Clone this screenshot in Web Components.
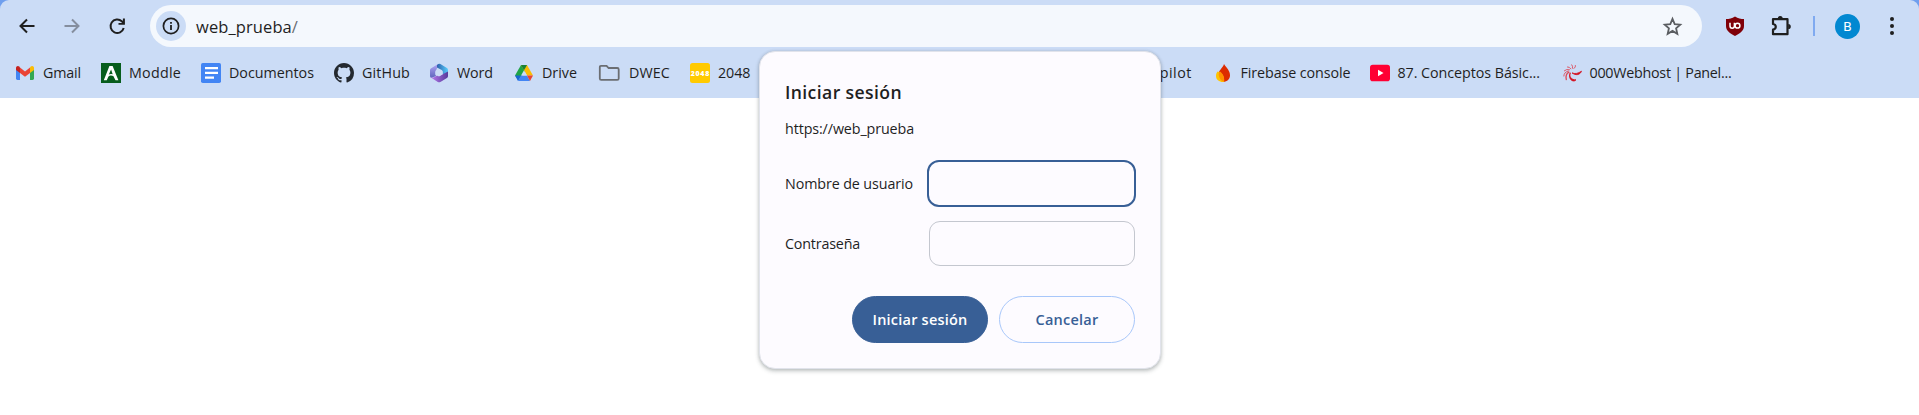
<!DOCTYPE html>
<html lang="es"><head><meta charset="utf-8"><title>web_prueba</title>
<style>html,body{margin:0;background:#fff;overflow:hidden}body{font-family:"Open Sans","Noto Sans",sans-serif;font-weight:400;color:#1f1f1f;height:415px}</style></head>
<body>
<browser-page></browser-page>
<script>
const ICONS = {
back:'<svg viewBox="0 0 20 20"><path d="M17.500 10H4M10 3.500 3.500 10l6.500 6.500" fill="none" stroke="#1f1f1f" stroke-width="2"/></svg>',
forward:'<svg viewBox="0 0 20 20"><path d="M2.500 10H16M10 3.500 16.500 10 10 16.500" fill="none" stroke="#858e9e" stroke-width="2"/></svg>',
reload:'<svg viewBox="0 0 20 20"><path d="M16.700 12A6.700 6.700 0 1 1 14.800 5.300L17 7.600" fill="none" stroke="#1f1f1f" stroke-width="2"/><path d="M17.900 2.500V8.800H11.500V6.900H15.900V2.500z" fill="#1f1f1f"/></svg>',
info:'<svg viewBox="0 0 20 20"><circle cx="10" cy="10" r="7.600" fill="none" stroke="#1f1f1f" stroke-width="1.700"/><path d="M9.100 9h1.800v5H9.100zM9.100 6h1.800v1.800H9.100z" fill="#1f1f1f"/></svg>',
star:'<svg viewBox="0 0 20 20"><path d="m10 2.700 2.100 5 5.300.5-4 3.500 1.200 5.300L10 14.200 5.400 17l1.200-5.300-4-3.500 5.300-.5z" fill="none" stroke="#5a5d61" stroke-width="1.700"/></svg>',
shield:'<svg viewBox="0 0 20 20"><path d="M10 .5C7 2.700 4 2.900 1 3v7c0 5 4 7.200 9 10 5-2.800 9-5 9-10V3c-3-.1-6-.3-9-2.500z" fill="#800008"/><path d="M5 6.800v3.200a2.200 2.200 0 0 0 4.400 0V6.800" fill="none" stroke="#fff" stroke-width="1.500"/><circle cx="12.500" cy="9.700" r="2.400" fill="none" stroke="#fff" stroke-width="1.500"/></svg>',
puzzle:'<svg viewBox="0 0 22 22"><path d="M3 4.200h14.500v15H3v-4.500c3.700-.7 3.700-5 0-5.700z" fill="none" stroke="#1f1f1f" stroke-width="2.200" stroke-linejoin="round"/><path d="M7.700 3.600a2.500 2.500 0 0 1 5 0zM18.200 8.900a2.600 2.600 0 0 1 0 5.200z" fill="#1f1f1f"/></svg>',
more:'<svg viewBox="0 0 20 20"><g fill="#1f1f1f"><circle cx="10" cy="3" r="2"/><circle cx="10" cy="10" r="2"/><circle cx="10" cy="17" r="2"/></g></svg>',
gmail:'<svg viewBox="0 0 20 20"><path d="M1 5v10.600Q1 17 2.400 17H5V8z" fill="#4285f4"/><path d="M15 8v9h2.600q1.400 0 1.400-1.400V5z" fill="#34a853"/><path d="M15 4.500V10l4-3V5c0-2-2-2.600-3.300-1.500z" fill="#fbbc04"/><path d="M5 4.500V10L1 7V5c0-2 2-2.600 3.300-1.500z" fill="#c5221f"/><path d="m5 4.500 5 3.900 5-3.900V10l-5 3.800L5 10z" fill="#ea4335"/></svg>',
moodle:'<svg viewBox="0 0 20 20"><path d="M0 0h20v20H0z" fill="#075d1d"/><path d="m2.800 17.200 5.600-14.200h3.200l5.800 14.200h-2.900l-2.200-4.300c-2-.9-3.900-.6-5 .9l-1.500 3.400zm5-5.600q1.700-.9 3.900-.3L10.100 6.500z" fill="#fff"/></svg>',
docs:'<svg viewBox="0 0 20 20"><rect width="20" height="20" rx="1.800" fill="#4285f4"/><path d="M4 4h13v2.200H4zM4 8.700h13v2.200H4zM4 13.600h9v2.200H4z" fill="#fff"/></svg>',
github:'<svg viewBox="0 0 16 16"><path fill="#24292f" d="M8 0C3.580 0 0 3.580 0 8c0 3.540 2.290 6.530 5.470 7.590.4.070.55-.17.55-.38 0-.19-.01-.82-.01-1.490-2.010.37-2.530-.49-2.690-.94-.09-.23-.48-.94-.82-1.130-.28-.15-.68-.52-.01-.53.63-.01 1.080.58 1.230.82.72 1.210 1.870.87 2.330.66.07-.52.28-.87.51-1.070-1.780-.2-3.640-.89-3.640-3.950 0-.87.31-1.590.82-2.150-.08-.2-.36-1.020.08-2.120 0 0 .67-.21 2.200.82.64-.18 1.320-.27 2-.27s1.360.09 2 .27c1.530-1.040 2.200-.82 2.200-.82.44 1.100.16 1.920.08 2.120.51.56.82 1.270.82 2.150 0 3.070-1.870 3.750-3.650 3.950.29.25.54.73.54 1.480 0 1.070-.01 1.930-.01 2.200 0 .21.15.46.55.38A8.010 8.010 0 0 0 16 8c0-4.420-3.580-8-8-8z"/></svg>',
word:'<svg viewBox="0 0 20 20"><defs><linearGradient id="a" x2="0" y2="1"><stop stop-color="#b3a6f5"/><stop offset="1" stop-color="#5f66bd"/></linearGradient><linearGradient id="b"><stop stop-color="#2d62ad"/><stop offset="1" stop-color="#58cdfb"/></linearGradient><linearGradient id="c"><stop stop-color="#b779ea"/><stop offset="1" stop-color="#573b9c"/></linearGradient></defs><path d="M9.500.8 2.200 5.200Q1 5.900 1 7.200v5.900q0 2 1.800 1.600L7.200 13Q6.300 12 6.300 10.500V9q0-1.500 1.200-2.500z" fill="url(#a)"/><path d="m8 2 1.300-1q1-.6 2.100 0l6.500 4Q19 5.700 19 7v6l-.8.600L13.700 11V9q0-1.400-1-2L8 4.600z" fill="url(#b)"/><path d="M2 14.300q2 .6 3.500-.3L8.600 12.300q1.200 1 2.500.3l7.900-4.200V13q0 1.300-1.100 2l-6.500 4q-1.300.7-2.600 0L3 15.300z" fill="url(#c)"/><path d="m8.500 7.200 1.500-.8 3.500 1.900v3.200L10 13.500 6.600 11.700V8.500z" fill="#cbdcf6"/></svg>',
drive:'<svg viewBox="0 0 20 20"><path d="M7 2h3l3 5-8.700 10L1 12.500z" fill="#1ea446"/><path d="M7 2h6l6 10.500h-6z" fill="#fbbc04"/><path d="M7 2h6l-3 5.200z" fill="#188038"/><path d="M1 12.500h6L4 18z" fill="#1967d2"/><path d="M7 12.500h6l3 5.500H4z" fill="#4285f4"/><path d="M13 12.500h6L16 18z" fill="#ea4335"/><path d="m10 7.200 3 5.300H7z" fill="#cbdcf6"/></svg>',
folder:'<svg viewBox="0 0 22 20"><path d="M2.500 2.800h5.600l2 2.200h8.700q1.400 0 1.400 1.400v9q0 1.400-1.400 1.400H2.700q-1.400 0-1.400-1.400V4.200q0-1.400 1.200-1.400z" fill="none" stroke="#6b6e73" stroke-width="1.800"/></svg>',
game:'<svg viewBox="0 0 20 20"><rect width="20" height="20" rx="2.500" fill="#ffca00"/><text x=".7" y="12.500" textLength="18.600" font-family="Open Sans" font-weight="800" font-size="7" fill="#fff">2048</text></svg>',
firebase:'<svg viewBox="0 0 20 20"><path d="M11 1c-1 4-6 6.500-6 11.500 0 4 2.400 6.200 5.500 6.200 3.600 0 6.500-2.400 6.500-6.500C17 7.500 13.500 5 11 1z" fill="#dd2c00"/><path d="M4.500 8.500c4.300.8 7.300 5 6.500 10.400-4.600.4-8-2.300-8-6 0-1.600.5-3.100 1.500-4.400z" fill="#ffc400"/><path d="M6.700 8.200c-.9 1.400-1.100 2.700-.9 4.200.4 2.700 2.500 5.600 5.200 6.300.7-4-.6-8-4.300-10.500z" fill="#ff9100"/></svg>',
youtube:'<svg viewBox="0 0 20 20"><rect y="1.800" width="20" height="16.400" rx="2.800" fill="#f03"/><path d="m8 6.800 5.500 3.200L8 13.200z" fill="#fff"/></svg>',
host:'<svg viewBox="0 0 20 20"><path d="M19.500 8.200c-1.500 3.800-5.500 4.600-9.500 1.700 3 1.300 6 .6 9.500-1.700zM8.300 9.800c-1.500 4 1.200 7.200 5.700 7-2.500 3.400-8.700-1-5.700-7z" fill="#d4101f" stroke="#d4101f" stroke-width=".8"/><g fill="none" stroke="#dc4a58" stroke-linecap="round"><path d="M7 9.200C4.500 10.500 3.500 13 4.300 16.500" stroke-width="1.300"/><path d="M6.500 8C3.500 8.500 2 10.500 1.800 13M7.500 6.700Q4.500 5.700 2.300 7.800M8.800 5.800Q7.500 3.700 5.500 3.900M10.500 5.300Q11 3 9.800 1.800M12 5.500Q14 4 13.500 2.500" stroke-width=".9"/></g></svg>'
};
function define(name, css, html, setup){
  const t=document.createElement('template'); t.innerHTML='<style>:host{box-sizing:border-box}'+css+'</style>'+html;
  customElements.define(name,class extends HTMLElement{connectedCallback(){if(this.shadowRoot)return;this.attachShadow({mode:'open'}).append(t.content.cloneNode(true));if(setup)setup(this,this.shadowRoot)}});
}
define('ui-icon',':host{display:block;flex:none;width:var(--w,20px);height:var(--h,20px)}span,svg{display:block;width:100%;height:100%}','<span></span>',(h,r)=>{r.querySelector('span').innerHTML=ICONS[h.getAttribute('name')]});
/* Label whose letter spacing is tuned so that the words span the given width. */
define('fit-text',':host{display:inline-block;white-space:pre;flex:none}','<span><slot></slot></span>',(h,r)=>{
  const w=+h.getAttribute('width'),s=r.querySelector('span'),n=h.textContent.length;
  h.style.width=w+'px'; s.style.letterSpacing=((w-s.getBoundingClientRect().width)/n)+'px';
});
define('book-mark',':host{display:flex;flex:none;align-items:center;height:30px;font-size:14.300px}.i{display:flex;justify-content:center;flex:none;margin-right:8px}fit-text{margin-bottom:2px}','<span class="i"></span><fit-text></fit-text>',(h,r)=>{
  h.style.width=h.getAttribute('span')+'px';
  const i=document.createElement('ui-icon');i.setAttribute('name',h.getAttribute('icon'));r.querySelector('.i').append(i);
  const old=r.querySelector('fit-text'),f=document.createElement('fit-text');f.setAttribute('width',h.getAttribute('text'));f.textContent=h.getAttribute('label');old.replaceWith(f);
});
define('bookmark-bar',':host{display:flex;height:51px;align-items:flex-start;padding:11px 0 0 15px}.gap{flex:none;width:348px}',`
<book-mark icon="gmail" label="Gmail" span="86" text="38"></book-mark>
<book-mark icon="moodle" label="Moddle" span="100" text="52"></book-mark>
<book-mark icon="docs" label="Documentos" span="133" text="85"></book-mark>
<book-mark icon="github" label="GitHub" span="95" text="48"></book-mark>
<book-mark icon="word" label="Word" span="85" text="36"></book-mark>
<book-mark icon="drive" label="Drive" span="84" text="35"></book-mark>
<book-mark icon="folder" label="DWEC" span="92" text="41" style="--w:23px"></book-mark>
<book-mark icon="game" label="2048" span="75" text="32.500"></book-mark>
<span class="gap"></span>
<book-mark icon="word" label="Copilot" span="99.500" text="51"></book-mark>
<book-mark icon="firebase" label="Firebase console" span="157" text="110"></book-mark>
<book-mark icon="youtube" label="87. Conceptos Básic..." span="192" text="142.500"></book-mark>
<book-mark icon="host" label="000Webhost | Panel..." span="175" text="142"></book-mark>`);
define('address-bar',':host{display:flex;align-items:center;flex:none;width:1552px;height:42px;border-radius:21px;background:#f4f8fd;padding:0 19px 0 6px;font-size:16.500px}.info{display:grid;place-items:center;width:30px;height:30px;border-radius:50%;background:#cbdcf6;margin-right:10px}.fill{flex:1}fit-text span{color:#6b6e73}','<span class="info"><ui-icon name="info"></ui-icon></span><fit-text width="102">web_prueba<span>/</span></fit-text><span class="fill"></span><ui-icon name="star" style="--w:21px;--h:21px"></ui-icon>');
define('tool-bar',':host{display:flex;height:47px;padding:5px 0 0 17px;align-items:center}.nav{display:flex;flex:none;gap:25px;width:133px}.right{display:flex;flex:none;align-items:center;padding-left:23px}.sep{width:2px;height:20px;background:#80aaf0;margin:0 20px 0 21px}.avatar{display:grid;place-items:center;width:25px;height:25px;border-radius:50%;background:#0288d1;color:#fff;font:400 13.500px Roboto,sans-serif;margin-right:22px}',
'<div class="nav"><ui-icon name="back"></ui-icon><ui-icon name="forward"></ui-icon><ui-icon name="reload"></ui-icon></div><address-bar></address-bar><div class="right"><ui-icon name="shield" style="margin-right:25px"></ui-icon><ui-icon name="puzzle" style="--w:22px;--h:22px"></ui-icon><span class="sep"></span><span class="avatar">B</span><ui-icon name="more"></ui-icon></div>');
define('login-field',':host{display:flex;align-items:center;height:45px;font-size:14.300px}:host([focused]){height:47px}.l{width:144px;flex:none}.f{box-sizing:border-box;flex:none;width:206px;height:45px;border:1px solid #c4c7cf;border-radius:11px}:host([focused]) .f{width:209px;height:47px;margin-left:-2px;border:2px solid #385f96;border-radius:12px}','<span class="l"><slot></slot></span><span class="f"></span>');
define('pill-button',':host{display:grid;place-items:center;width:136px;height:47px;border-radius:24px;font-size:14.500px;font-weight:600;border:1px solid #a8c7fa;color:#385f96}:host([primary]){background:#385f96;color:#fff;border-color:#385f96}','<slot></slot>');
define('login-dialog',':host{display:flex;flex-direction:column;position:absolute;left:759px;top:51px;width:402px;height:318px;border-radius:16px;background:#fdfbff;border:1px solid #e1e3eb;box-shadow:0 2px 4px rgba(60,70,70,.32),0 0 3px rgba(60,64,67,.14);padding:26px 25px 0 25px}.title{font-size:17.600px;font-weight:600;line-height:28px;margin-bottom:12px}.url{font-size:14.300px;line-height:22px;margin-bottom:20px}.second{margin-top:14px}.buttons{display:flex;justify-content:flex-end;gap:11px;margin-top:30px}',
'<div class="title"><fit-text width="117">Iniciar sesión</fit-text></div><div class="url"><fit-text width="129">https://web_prueba</fit-text></div><login-field focused><fit-text width="128">Nombre de usuario</fit-text></login-field><login-field class="second"><fit-text width="75">Contraseña</fit-text></login-field><div class="buttons"><pill-button primary><fit-text width="95">Iniciar sesión</fit-text></pill-button><pill-button><fit-text width="63">Cancelar</fit-text></pill-button></div>');
define('browser-page',':host{display:block}.corner{background:#6f9fee}.chrome{background:#cbdcf6;height:98px;border-radius:9px 9px 0 0}','<div class="corner"><div class="chrome"><tool-bar></tool-bar><bookmark-bar></bookmark-bar></div></div><login-dialog></login-dialog>');
</script></body></html>
